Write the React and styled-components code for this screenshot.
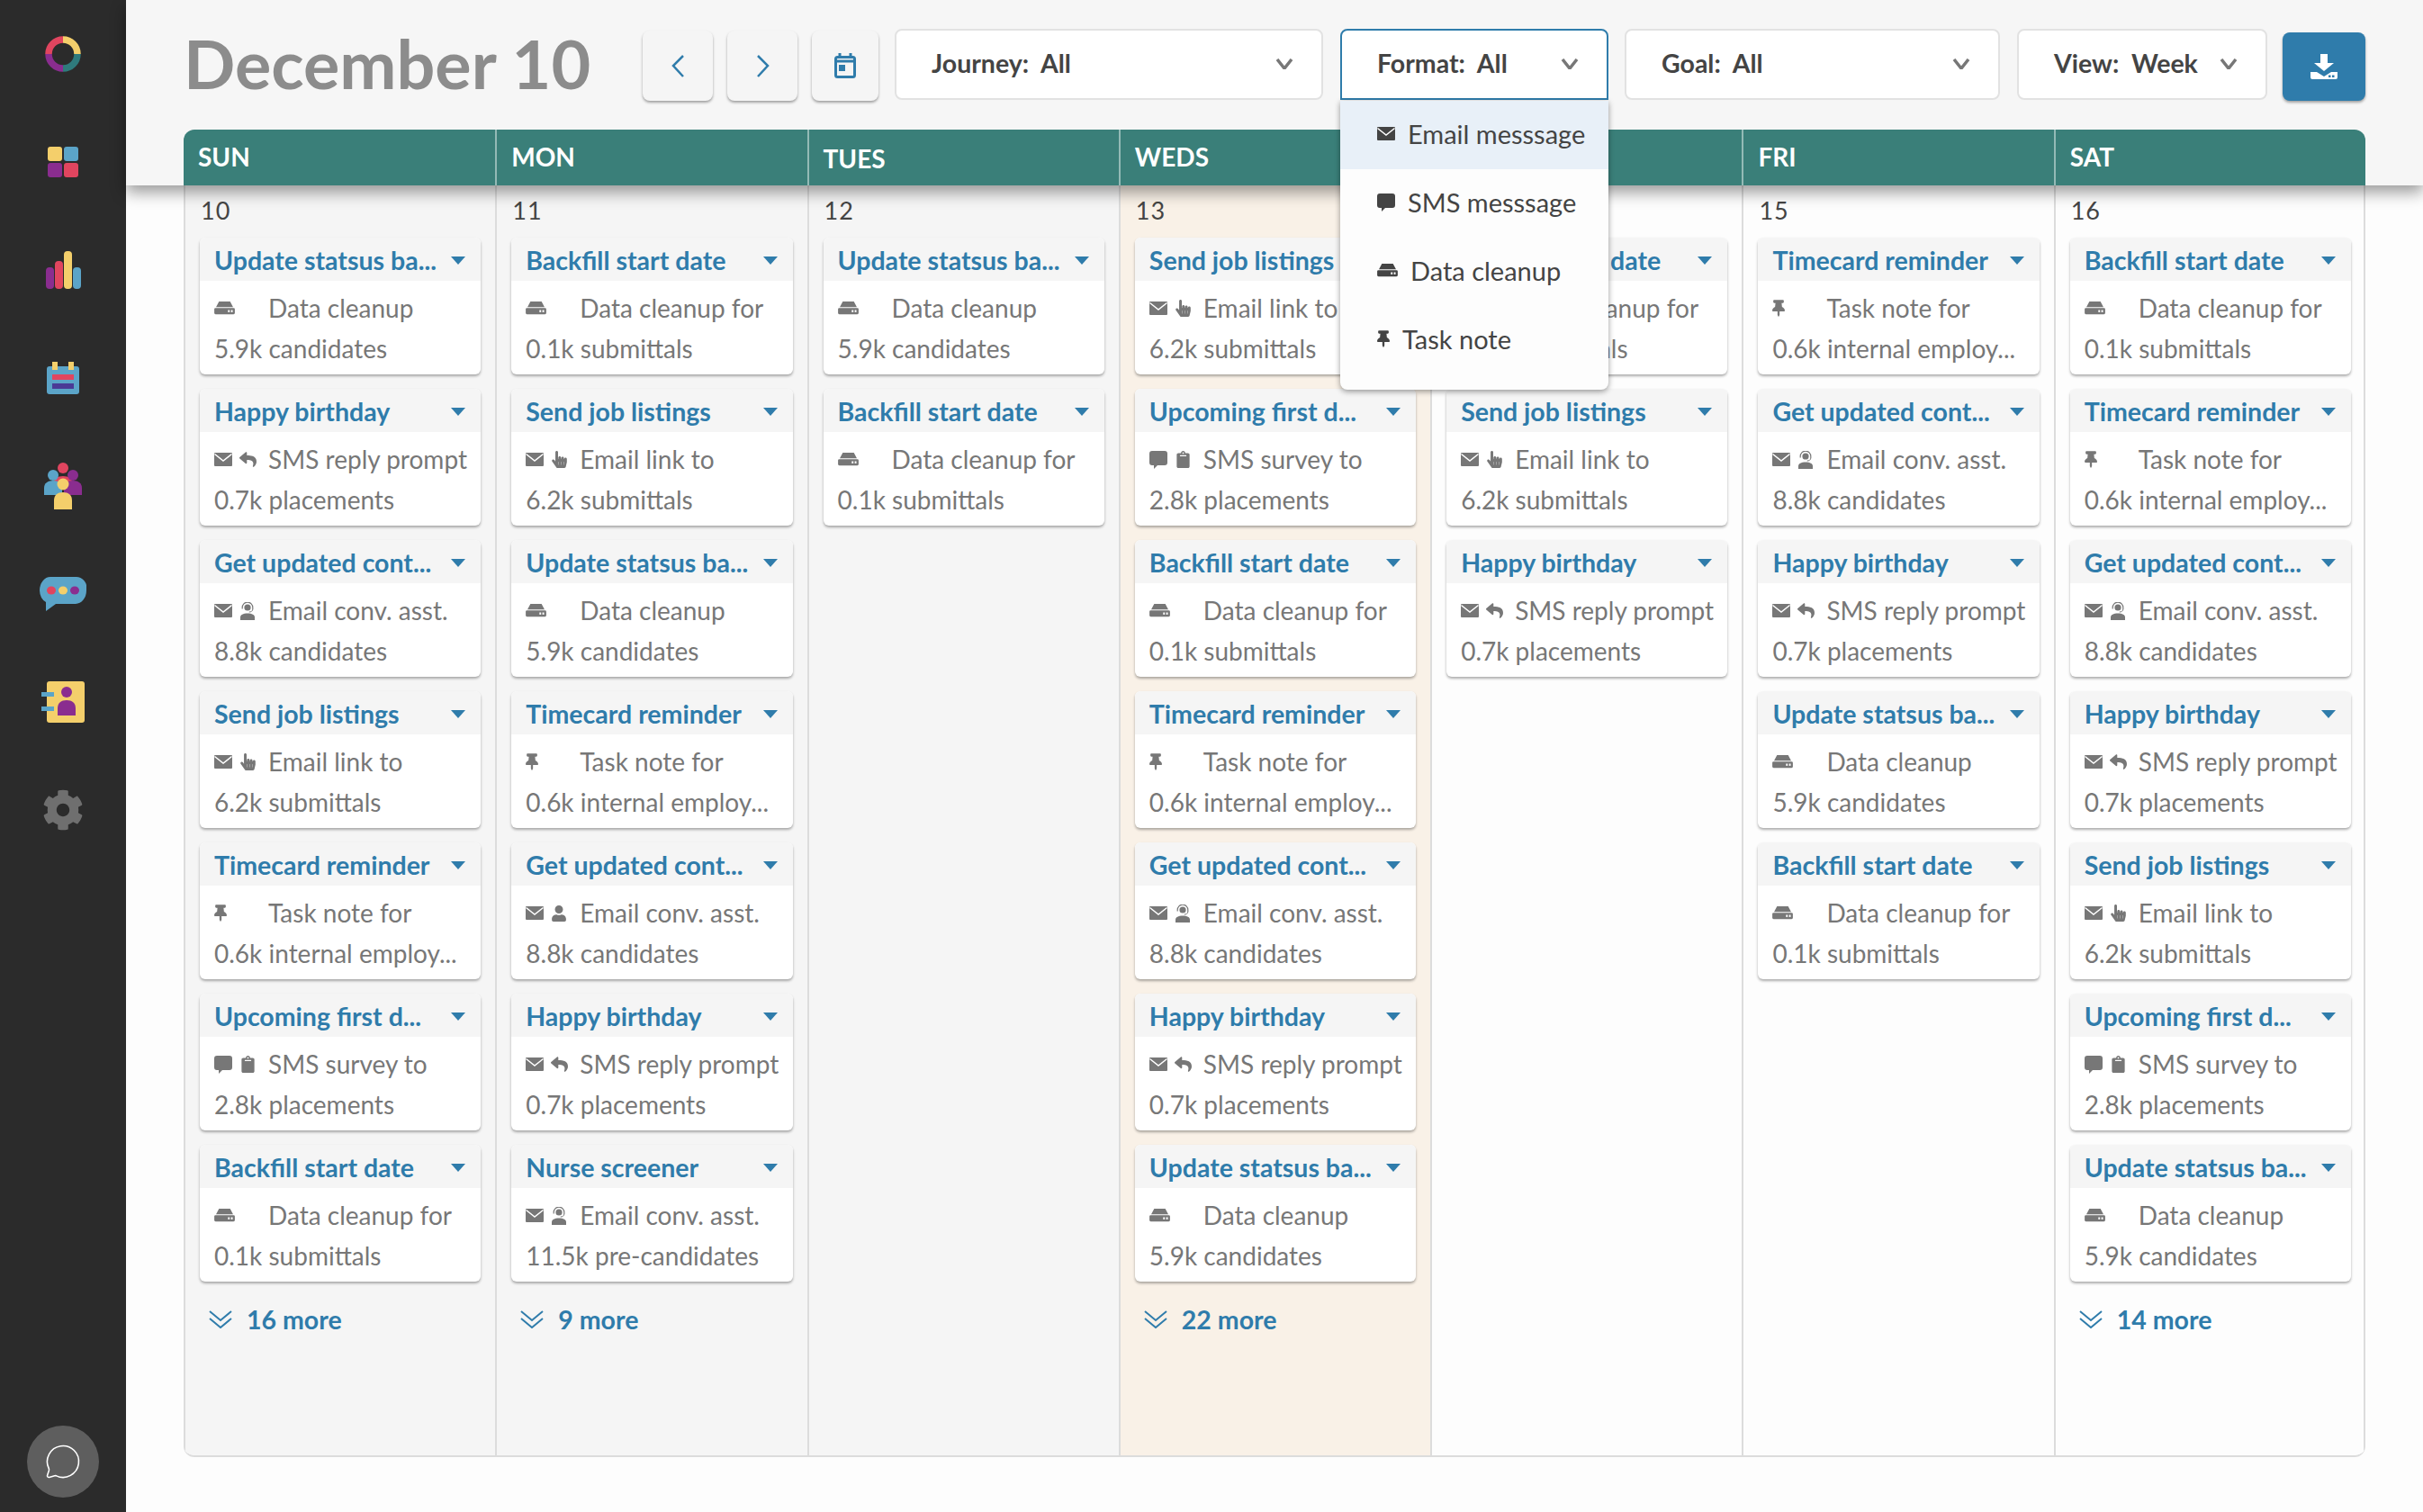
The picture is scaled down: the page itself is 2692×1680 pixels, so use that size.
import React from "react";
import styled, { createGlobalStyle } from "styled-components";
import { FaCog, FaReply, FaHandPointer, FaUser, FaClipboard, FaThumbtack } from "react-icons/fa";
import { MessageCircle } from "lucide-react";

const BLUE = "#2f7cab";
const FONT = `Lato, "Open Sans", "Liberation Sans", sans-serif`;

const Global = createGlobalStyle`
  html, body { margin: 0; padding: 0; background: #fdfdfd; }
  * { box-sizing: border-box; }
  body { font-family: ${FONT}; }
`;

const Page = styled.div`
  display: flex;
  width: 2692px;
  height: 1680px;
  overflow: hidden;
`;

const Sidebar = styled.nav`
  width: 140px;
  flex: none;
  background: #2b2b2b;
  display: flex;
  flex-direction: column;
  align-items: center;
`;

const NavSlot = styled.div`
  height: 120px;
  display: flex;
  align-items: center;
  justify-content: center;
  color: #6f6f6f;
`;

const ChatBubble = styled.div`
  width: 80px;
  height: 80px;
  margin-top: auto;
  margin-bottom: 16px;
  border-radius: 50%;
  background: #5e5e5e;
  color: #fff;
  display: flex;
  align-items: center;
  justify-content: center;
`;

const Main = styled.main`
  flex: 1;
  min-width: 0;
  display: flex;
  flex-direction: column;
`;

const Top = styled.header`
  position: relative;
  z-index: 2;
  background: #f6f6f6;
  padding: 0 64px;
  box-shadow: 0 8px 16px rgba(0, 0, 0, 0.38);
`;

const Toolbar = styled.div`
  height: 144px;
  padding-top: 32px;
  display: flex;
  align-items: flex-start;
`;

const Title = styled.h1`
  width: 510px;
  margin: 0;
  font-size: 75.5px;
  line-height: 75px;
  font-weight: 700;
  color: #8c8c8c;
  white-space: nowrap;
`;

const IconButton = styled.button`
  width: ${(p) => p.$w}px;
  height: 78px;
  margin: 2px ${(p) => p.$gap}px 0 0;
  padding: 0;
  border: 0;
  border-radius: 8px;
  background: #f5f5f5;
  color: ${BLUE};
  box-shadow: 0 2px 3px rgba(0, 0, 0, 0.35);
  display: flex;
  align-items: center;
  justify-content: center;
`;

const DownloadButton = styled(IconButton)`
  height: 76px;
  margin: 4px 0 0;
  background: ${BLUE};
  color: #fff;
`;

const SelectWrap = styled.div`
  position: relative;
  width: ${(p) => p.$w}px;
  margin-right: ${(p) => p.$gap}px;
`;

const SelectBox = styled.div`
  height: 79px;
  padding: 0 31px 2px 39px;
  border: 2px solid ${(p) => (p.$open ? BLUE : "#e2e2e2")};
  border-radius: ${(p) => (p.$open ? "8px 8px 0 0" : "8px")};
  background: #fff;
  display: flex;
  align-items: center;
  justify-content: space-between;
  font-size: 28.5px;
  font-weight: 700;
  color: #444;
  white-space: pre;

  span {
    margin-top: -2px;
  }
`;

const Menu = styled.ul`
  position: absolute;
  top: 80px;
  left: 0;
  width: 100%;
  height: 321px;
  margin: 0;
  padding: 0;
  list-style: none;
  background: #fdfdfd;
  border-radius: 0 0 8px 8px;
  box-shadow: 0 2px 6px rgba(0, 0, 0, 0.4);
`;

const MenuItem = styled.li`
  height: 76px;
  padding: 0 0 3px 41px;
  display: flex;
  align-items: center;
  gap: 14px;
  font-size: 29px;
  color: #444;
  background: ${(p) => (p.$active ? "#e8f0f8" : "transparent")};
`;

const HeaderRow = styled.div`
  display: grid;
  grid-template-columns: repeat(7, minmax(0, 1fr));
  height: 62px;
  background: #3a7f79;
  border-radius: 12px 12px 0 0;
`;

const HeaderCell = styled.div`
  padding: ${(p) => (p.$nudge ? "4px" : "0")} 0 2px 16px;
  border-left: ${(p) => (p.$first ? "0" : "2px solid #93bab6")};
  display: flex;
  align-items: center;
  font-size: 28px;
  font-weight: 700;
  color: #fff;
`;

const Board = styled.div`
  flex: none;
  height: 1413px;
  margin: 0 64px;
  display: grid;
  grid-template-columns: repeat(7, minmax(0, 1fr));
  border-bottom: 2px solid #dcdcdc;
  border-radius: 0 0 12px 12px;
  overflow: hidden;
`;

const tones = { past: "#f5f5f5", today: "#f9f1e7", future: "#fdfdfd" };

const Column = styled.section`
  padding: 0 ${(p) => (p.$last ? "14px" : "16px")} 0 16px;
  background: ${(p) => tones[p.$tone]};
  border-left: 2px solid #dcdcdc;
  border-right: ${(p) => (p.$last ? "2px solid #dcdcdc" : "0")};
`;

const DayNumber = styled.div`
  height: 58px;
  padding: 12px 0 0 1px;
  font-size: 27px;
  line-height: 32px;
  color: #444;
  letter-spacing: 1px;
`;

const CardList = styled.div`
  display: flex;
  flex-direction: column;
  gap: 16px;
`;

const Card = styled.article`
  height: 152px;
  background: #fff;
  border-radius: 6px;
  box-shadow: 0 2px 3px rgba(0, 0, 0, 0.32);
  overflow: hidden;
`;

const CardHead = styled.div`
  height: 48px;
  padding: 2px 17px 0 16px;
  background: #f5f5f5;
  display: flex;
  align-items: center;
  justify-content: space-between;
`;

const CardTitle = styled.span`
  font-size: 28.5px;
  font-weight: 700;
  color: ${BLUE};
  white-space: nowrap;
`;

const Caret = styled.span`
  flex: none;
  width: 0;
  height: 0;
  border-style: solid;
  border-width: 9px 8px 0 8px;
  border-color: ${BLUE} transparent transparent transparent;
`;

const CardBody = styled.div`
  padding: 8px 16px 0;
  font-size: 28px;
  line-height: 45px;
  color: #777;
  white-space: nowrap;
`;

const FormatLine = styled.div`
  display: flex;
  align-items: center;
`;

const IconSlot = styled.span`
  width: 60px;
  flex: none;
  display: flex;
  align-items: center;
  gap: 8px;
`;

const More = styled.div`
  margin-top: 28px;
  padding-left: 10px;
  display: flex;
  align-items: center;
  gap: 16px;
  font-size: 28.5px;
  line-height: 28px;
  font-weight: 700;
  color: ${BLUE};
`;

const Pin = styled(FaThumbtack)`
  width: 14px;
  height: 19px;
`;

/* sidebar artwork */
const C = { y: "#f4cf6b", b: "#5ba4c8", p: "#8a2d8f", r: "#e0455f", t: "#2f7a7c", i: "#4a3a96" };

const Logo = () => (
  <svg width="40" height="40" viewBox="0 0 40 40" fill="none" strokeWidth="7.5">
    <path d="M20 4a16 16 0 0 1 16 16" stroke={C.y} />
    <path d="M36 20a16 16 0 0 1-16 16" stroke={C.t} />
    <path d="M20 36A16 16 0 0 1 4 20" stroke={C.p} />
    <path d="M4 20A16 16 0 0 1 20 4" stroke={C.r} />
  </svg>
);

const GridIcon = () => (
  <svg width="34" height="34" viewBox="0 0 34 34">
    <rect width="16" height="16" rx="3" fill={C.y} />
    <rect x="18" width="16" height="16" rx="3" fill={C.b} />
    <rect y="18" width="16" height="16" rx="3" fill={C.p} />
    <rect x="18" y="18" width="16" height="16" rx="3" fill={C.r} />
  </svg>
);

const BarsIcon = () => (
  <svg width="39" height="42" viewBox="0 0 39 42">
    <rect y="18" width="9" height="24" rx="4" fill={C.p} />
    <rect x="10" y="11" width="9" height="31" rx="4" fill={C.r} />
    <rect x="20" width="9" height="42" rx="4" fill={C.y} />
    <rect x="30" y="18" width="9" height="24" rx="4" fill={C.b} />
  </svg>
);

const CalendarArt = () => (
  <svg width="36" height="36" viewBox="0 0 36 36">
    <rect y="5" width="36" height="31" rx="3" fill={C.b} />
    <rect x="6" width="6" height="9" fill={C.y} />
    <rect x="24" width="6" height="9" fill={C.y} />
    <rect x="6" y="14" width="24" height="6" fill={C.r} />
    <rect x="6" y="24" width="24" height="6" fill={C.i} />
  </svg>
);

const PeopleArt = () => (
  <svg width="42" height="52" viewBox="0 0 42 52">
    <circle cx="21" cy="6" r="6" fill={C.r} />
    <path d="M10 24c0-6 5-9 11-9s11 3 11 9z" fill={C.r} />
    <circle cx="10" cy="14" r="6" fill={C.b} />
    <path d="M0 36V28c0-5 4-8 10-8s10 3 10 8v8z" fill={C.b} />
    <circle cx="32" cy="14" r="6" fill={C.p} />
    <path d="M22 36V28c0-5 4-8 10-8s10 3 10 8v8z" fill={C.p} />
    <circle cx="21" cy="24" r="6.5" fill={C.y} />
    <path d="M11 52V42c0-6 4-9 10-9s10 3 10 9v10z" fill={C.y} />
  </svg>
);

const ChatArt = () => (
  <svg width="52" height="38" viewBox="0 0 52 38">
    <path d="M12 0h28a12 12 0 0 1 12 15a12 15 0 0 1-12 15H18L7 38V28A12 15 0 0 1 0 15A12 15 0 0 1 12 0z" fill={C.b} />
    <ellipse cx="13" cy="15" rx="5" ry="4.5" fill={C.r} />
    <ellipse cx="26" cy="15" rx="5" ry="4.5" fill={C.y} />
    <ellipse cx="39" cy="15" rx="5" ry="4.5" fill={C.p} />
  </svg>
);

const ContactArt = () => (
  <svg width="48" height="46" viewBox="0 0 48 46">
    <rect x="6" width="42" height="46" rx="3" fill={C.y} />
    <rect y="12" width="14" height="5" fill={C.b} />
    <rect y="28" width="14" height="5" fill={C.b} />
    <ellipse cx="28" cy="12" rx="6" ry="6" fill={C.p} />
    <path d="M18 38V30c0-6 4-9 10-9s10 3 10 9v8z" fill={C.p} />
  </svg>
);

/* small format icons */
const MailIcon = ({ size = 20 }) => (
  <svg width={size} height={size * 0.75} viewBox="0 0 20 15">
    <rect width="20" height="15" rx="1" fill="currentColor" />
    <path d="M0.5 1.5L10 9l9.5-7.500" fill="none" stroke="#fff" strokeWidth="1.5" />
  </svg>
);

const DriveIcon = ({ size = 23 }) => (
  <svg width={size} height={size * 0.62} viewBox="0 0 24 15">
    <path d="M5.5 0h13l3.5 6.5H2z" fill="currentColor" />
    <rect y="7.5" width="24" height="7.5" rx="1.5" fill="currentColor" />
    <rect x="16" y="10" width="2" height="2.5" fill="#fff" />
    <rect x="19.5" y="10" width="2" height="2.5" fill="#fff" />
  </svg>
);

const BubbleIcon = ({ size = 20 }) => (
  <svg width={size} height={size} viewBox="0 0 20 20">
    <path d="M3 0h14a3 3 0 0 1 3 3v10a3 3 0 0 1-3 3H9l-4 4v-4H3a3 3 0 0 1-3-3V3a3 3 0 0 1 3-3z" fill="currentColor" />
  </svg>
);

const AgentIcon = () => (
  <svg width="18" height="20" viewBox="0 0 18 20">
    <circle cx="9" cy="6" r="3.6" fill="currentColor" />
    <path d="M3.2 7.500V6a5.800 5.800 0 0 1 11.600 0v2" fill="none" stroke="currentColor" strokeWidth="1.2" />
    <path d="M14.800 8c0 2-2 3-4 3" fill="none" stroke="currentColor" strokeWidth="1" />
    <path d="M1 20v-3c0-3 3-4.500 8-4.500s8 1.500 8 4.500v3z" fill="currentColor" />
  </svg>
);

const formats = {
  drive: [<DriveIcon key="a" />],
  pin: [<Pin key="a" />],
  reply: [<MailIcon key="a" />, <FaReply key="b" size={19} />],
  link: [<MailIcon key="a" />, <FaHandPointer key="b" size={19} />],
  agent: [<MailIcon key="a" />, <AgentIcon key="b" />],
  user: [<MailIcon key="a" />, <FaUser key="b" size={18} />],
  survey: [<BubbleIcon key="a" />, <FaClipboard key="b" size={19} />],
};

const CARDS = {
  update: { title: "Update statsus ba...", icon: "drive", line: "Data cleanup", count: "5.9k candidates" },
  backfill: { title: "Backfill start date", icon: "drive", line: "Data cleanup for", count: "0.1k submittals" },
  happy: { title: "Happy birthday", icon: "reply", line: "SMS reply prompt", count: "0.7k placements" },
  contact: { title: "Get updated cont...", icon: "agent", line: "Email conv. asst.", count: "8.8k candidates" },
  contactUser: { title: "Get updated cont...", icon: "user", line: "Email conv. asst.", count: "8.8k candidates" },
  send: { title: "Send job listings", icon: "link", line: "Email link to", count: "6.2k submittals" },
  timecard: { title: "Timecard reminder", icon: "pin", line: "Task note for", count: "0.6k internal employ..." },
  upcoming: { title: "Upcoming first d...", icon: "survey", line: "SMS survey to", count: "2.8k placements" },
  nurse: { title: "Nurse screener", icon: "agent", line: "Email conv. asst.", count: "11.5k pre-candidates" },
};

const DAYS = [
  { name: "SUN", date: 10, tone: "past", more: 16, cards: ["update", "happy", "contact", "send", "timecard", "upcoming", "backfill"] },
  { name: "MON", date: 11, tone: "past", more: 9, cards: ["backfill", "send", "update", "timecard", "contactUser", "happy", "nurse"] },
  { name: "TUES", date: 12, tone: "past", nudge: true, cards: ["update", "backfill"] },
  { name: "WEDS", date: 13, tone: "today", more: 22, cards: ["send", "upcoming", "backfill", "timecard", "contact", "happy", "update"] },
  { name: "THURS", date: 14, tone: "future", cards: ["backfill", "send", "happy"] },
  { name: "FRI", date: 15, tone: "future", cards: ["timecard", "contact", "happy", "update", "backfill"] },
  { name: "SAT", date: 16, tone: "future", more: 14, cards: ["backfill", "timecard", "contact", "happy", "send", "upcoming", "update"] },
];

const Chevron = ({ d, w, h, color = "currentColor", sw = 2.5 }) => (
  <svg width={w} height={h} viewBox={`0 0 ${w} ${h}`} fill="none" stroke={color} strokeWidth={sw}>
    <path d={d} />
  </svg>
);

function Select({ label, value, w, gap, open, children }) {
  return (
    <SelectWrap $w={w} $gap={gap}>
      <SelectBox $open={open}>
        <span>{label}:  {value}</span>
        <Chevron d="M2 1l8 10 8-10" w={20} h={12} color="#777" sw={3.5} />
      </SelectBox>
      {children}
    </SelectWrap>
  );
}

export default function App() {
  return (
    <Page>
      <Global />
      <Sidebar>
        <NavSlot><Logo /></NavSlot>
        <NavSlot><GridIcon /></NavSlot>
        <NavSlot><BarsIcon /></NavSlot>
        <NavSlot><CalendarArt /></NavSlot>
        <NavSlot><PeopleArt /></NavSlot>
        <NavSlot><ChatArt /></NavSlot>
        <NavSlot><ContactArt /></NavSlot>
        <NavSlot><FaCog size={46} /></NavSlot>
        <ChatBubble><MessageCircle size={42} strokeWidth={0.9} /></ChatBubble>
      </Sidebar>
      <Main>
        <Top>
          <Toolbar>
            <Title>December 10</Title>
            <IconButton $w={78} $gap={16}><Chevron d="M13 1L2 12l11 12" w={15} h={25} /></IconButton>
            <IconButton $w={78} $gap={16}><Chevron d="M2 1l11 11L2 24" w={15} h={25} /></IconButton>
            <IconButton $w={74} $gap={18}>
              <svg width="24" height="28" viewBox="0 0 24 28" fill="none" stroke="currentColor" strokeWidth="3">
                <rect x="1.500" y="4.500" width="21" height="22" rx="2" />
                <path d="M1.500 9h21" />
                <path d="M6 0v5M18 0v5" />
                <rect x="5" y="13" width="7" height="7" fill="currentColor" stroke="none" />
              </svg>
            </IconButton>
            <Select label="Journey" value="All" w={476} gap={19} />
            <Select label="Format" value="All" w={298} gap={18} open>
              <Menu>
                <MenuItem $active><MailIcon /><span>Email messsage</span></MenuItem>
                <MenuItem><BubbleIcon /><span>SMS messsage</span></MenuItem>
                <MenuItem><DriveIcon /><span>Data cleanup</span></MenuItem>
                <MenuItem><Pin /><span>Task note</span></MenuItem>
              </Menu>
            </Select>
            <Select label="Goal" value="All" w={417} gap={19} />
            <Select label="View" value="Week" w={278} gap={17} />
            <DownloadButton $w={92}>
              <svg width="30" height="28" viewBox="0 0 30 28" fill="currentColor">
                <path d="M11 0h8v10h7L15 19 4 10h7z" />
                <path d="M0 20h7l8 5 8-5h7v6a2 2 0 0 1-2 2H2a2 2 0 0 1-2-2z" />
                <rect x="20" y="23.500" width="2.500" height="2.500" fill={BLUE} />
                <rect x="24" y="23.500" width="2.500" height="2.500" fill={BLUE} />
              </svg>
            </DownloadButton>
          </Toolbar>
          <HeaderRow>
            {DAYS.map((d, i) => (
              <HeaderCell key={d.name} $first={i === 0} $nudge={d.nudge}>{d.name}</HeaderCell>
            ))}
          </HeaderRow>
        </Top>
        <Board>
          {DAYS.map((d, i) => (
            <Column key={d.name} $tone={d.tone} $last={i === 6}>
              <DayNumber>{d.date}</DayNumber>
              <CardList>
                {d.cards.map((id, n) => {
                  const c = CARDS[id];
                  return (
                    <Card key={n}>
                      <CardHead>
                        <CardTitle>{c.title}</CardTitle>
                        <Caret />
                      </CardHead>
                      <CardBody>
                        <FormatLine>
                          <IconSlot>{formats[c.icon]}</IconSlot>
                          {c.line}
                        </FormatLine>
                        <div>{c.count}</div>
                      </CardBody>
                    </Card>
                  );
                })}
              </CardList>
              {d.more && (
                <More>
                  <Chevron d="M1 1l12 10L25 1M1 9l12 10L25 9" w={26} h={20} sw={2} />
                  {d.more} more
                </More>
              )}
            </Column>
          ))}
        </Board>
      </Main>
    </Page>
  );
}
